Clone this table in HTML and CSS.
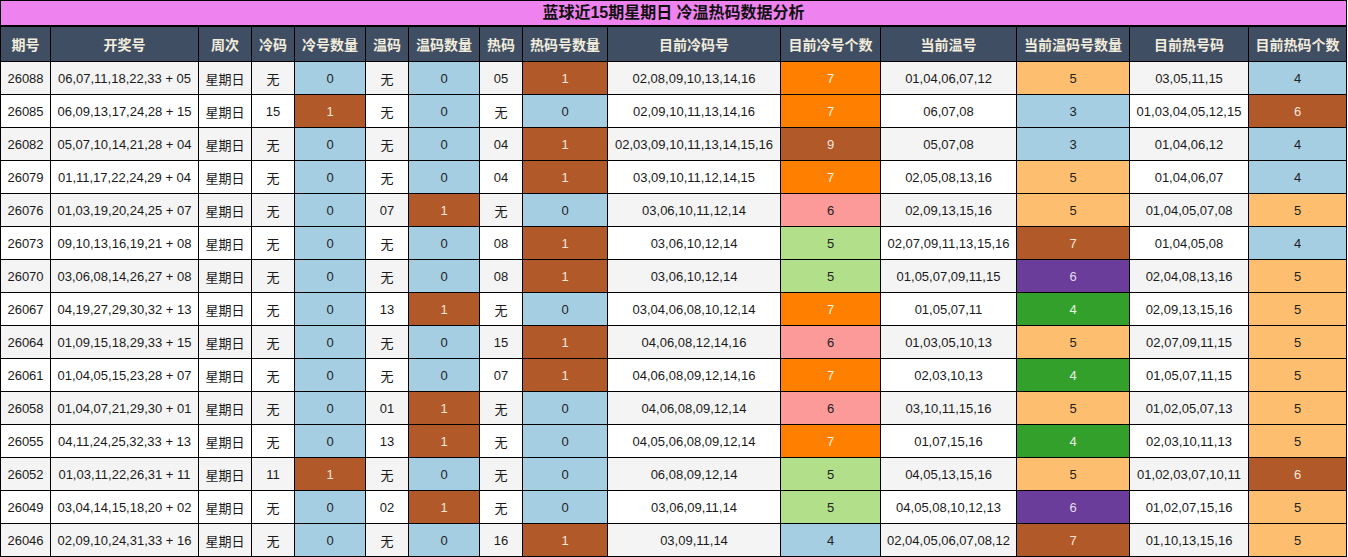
FILE: index.html
```html
<!DOCTYPE html>
<html lang="zh">
<head>
<meta charset="utf-8">
<title>蓝球近15期星期日 冷温热码数据分析</title>
<link rel="stylesheet" href="styles.css">
</head>
<body>
<div class="title">蓝球近15期星期日 冷温热码数据分析</div>
<table class="grid">
<colgroup>
<col class="w50"><col class="w148"><col class="w53"><col class="w43"><col class="w71"><col class="w43"><col class="w71"><col class="w43"><col class="w85"><col class="w173"><col class="w100"><col class="w136"><col class="w113"><col class="w119"><col class="w98">
</colgroup>
<thead>
<tr><th>期号</th><th>开奖号</th><th>周次</th><th>冷码</th><th>冷号数量</th><th>温码</th><th>温码数量</th><th>热码</th><th>热码号数量</th><th>目前冷码号</th><th>目前冷号个数</th><th>当前温号</th><th>当前温码号数量</th><th>目前热号码</th><th>目前热码个数</th></tr>
</thead>
<tbody>
<tr><td>26088</td><td>06,07,11,18,22,33 + 05</td><td>星期日</td><td>无</td><td class="lb">0</td><td>无</td><td class="lb">0</td><td>05</td><td class="br">1</td><td>02,08,09,10,13,14,16</td><td class="or">7</td><td>01,04,06,07,12</td><td class="lo">5</td><td>03,05,11,15</td><td class="lb">4</td></tr>
<tr><td>26085</td><td>06,09,13,17,24,28 + 15</td><td>星期日</td><td>15</td><td class="br">1</td><td>无</td><td class="lb">0</td><td>无</td><td class="lb">0</td><td>02,09,10,11,13,14,16</td><td class="or">7</td><td>06,07,08</td><td class="lb">3</td><td>01,03,04,05,12,15</td><td class="br">6</td></tr>
<tr><td>26082</td><td>05,07,10,14,21,28 + 04</td><td>星期日</td><td>无</td><td class="lb">0</td><td>无</td><td class="lb">0</td><td>04</td><td class="br">1</td><td>02,03,09,10,11,13,14,15,16</td><td class="br">9</td><td>05,07,08</td><td class="lb">3</td><td>01,04,06,12</td><td class="lb">4</td></tr>
<tr><td>26079</td><td>01,11,17,22,24,29 + 04</td><td>星期日</td><td>无</td><td class="lb">0</td><td>无</td><td class="lb">0</td><td>04</td><td class="br">1</td><td>03,09,10,11,12,14,15</td><td class="or">7</td><td>02,05,08,13,16</td><td class="lo">5</td><td>01,04,06,07</td><td class="lb">4</td></tr>
<tr><td>26076</td><td>01,03,19,20,24,25 + 07</td><td>星期日</td><td>无</td><td class="lb">0</td><td>07</td><td class="br">1</td><td>无</td><td class="lb">0</td><td>03,06,10,11,12,14</td><td class="pk">6</td><td>02,09,13,15,16</td><td class="lo">5</td><td>01,04,05,07,08</td><td class="lo">5</td></tr>
<tr><td>26073</td><td>09,10,13,16,19,21 + 08</td><td>星期日</td><td>无</td><td class="lb">0</td><td>无</td><td class="lb">0</td><td>08</td><td class="br">1</td><td>03,06,10,12,14</td><td class="lg">5</td><td>02,07,09,11,13,15,16</td><td class="br">7</td><td>01,04,05,08</td><td class="lb">4</td></tr>
<tr><td>26070</td><td>03,06,08,14,26,27 + 08</td><td>星期日</td><td>无</td><td class="lb">0</td><td>无</td><td class="lb">0</td><td>08</td><td class="br">1</td><td>03,06,10,12,14</td><td class="lg">5</td><td>01,05,07,09,11,15</td><td class="pu">6</td><td>02,04,08,13,16</td><td class="lo">5</td></tr>
<tr><td>26067</td><td>04,19,27,29,30,32 + 13</td><td>星期日</td><td>无</td><td class="lb">0</td><td>13</td><td class="br">1</td><td>无</td><td class="lb">0</td><td>03,04,06,08,10,12,14</td><td class="or">7</td><td>01,05,07,11</td><td class="gr">4</td><td>02,09,13,15,16</td><td class="lo">5</td></tr>
<tr><td>26064</td><td>01,09,15,18,29,33 + 15</td><td>星期日</td><td>无</td><td class="lb">0</td><td>无</td><td class="lb">0</td><td>15</td><td class="br">1</td><td>04,06,08,12,14,16</td><td class="pk">6</td><td>01,03,05,10,13</td><td class="lo">5</td><td>02,07,09,11,15</td><td class="lo">5</td></tr>
<tr><td>26061</td><td>01,04,05,15,23,28 + 07</td><td>星期日</td><td>无</td><td class="lb">0</td><td>无</td><td class="lb">0</td><td>07</td><td class="br">1</td><td>04,06,08,09,12,14,16</td><td class="or">7</td><td>02,03,10,13</td><td class="gr">4</td><td>01,05,07,11,15</td><td class="lo">5</td></tr>
<tr><td>26058</td><td>01,04,07,21,29,30 + 01</td><td>星期日</td><td>无</td><td class="lb">0</td><td>01</td><td class="br">1</td><td>无</td><td class="lb">0</td><td>04,06,08,09,12,14</td><td class="pk">6</td><td>03,10,11,15,16</td><td class="lo">5</td><td>01,02,05,07,13</td><td class="lo">5</td></tr>
<tr><td>26055</td><td>04,11,24,25,32,33 + 13</td><td>星期日</td><td>无</td><td class="lb">0</td><td>13</td><td class="br">1</td><td>无</td><td class="lb">0</td><td>04,05,06,08,09,12,14</td><td class="or">7</td><td>01,07,15,16</td><td class="gr">4</td><td>02,03,10,11,13</td><td class="lo">5</td></tr>
<tr><td>26052</td><td>01,03,11,22,26,31 + 11</td><td>星期日</td><td>11</td><td class="br">1</td><td>无</td><td class="lb">0</td><td>无</td><td class="lb">0</td><td>06,08,09,12,14</td><td class="lg">5</td><td>04,05,13,15,16</td><td class="lo">5</td><td>01,02,03,07,10,11</td><td class="br">6</td></tr>
<tr><td>26049</td><td>03,04,14,15,18,20 + 02</td><td>星期日</td><td>无</td><td class="lb">0</td><td>02</td><td class="br">1</td><td>无</td><td class="lb">0</td><td>03,06,09,11,14</td><td class="lg">5</td><td>04,05,08,10,12,13</td><td class="pu">6</td><td>01,02,07,15,16</td><td class="lo">5</td></tr>
<tr><td>26046</td><td>02,09,10,24,31,33 + 16</td><td>星期日</td><td>无</td><td class="lb">0</td><td>无</td><td class="lb">0</td><td>16</td><td class="br">1</td><td>03,09,11,14</td><td class="lb">4</td><td>02,04,05,06,07,08,12</td><td class="br">7</td><td>01,10,13,15,16</td><td class="lo">5</td></tr>
</tbody>
</table>
</body>
</html>
```

FILE: styles.css
```css
html, body {
  margin: 0;
  padding: 0;
  background: #ffffff;
}
body {
  font-family: "Liberation Sans", Arial, "Noto Sans CJK SC", sans-serif;
  color: #1a1a1a;
  width: 1348px;
}
.title {
  box-sizing: border-box;
  width: 1347px;
  height: 26px;
  border: 1px solid #000;
  border-bottom: 1px solid #000;
  background: #ee82ee;
  color: #111;
  font-weight: bold;
  font-size: 16px;
  line-height: 24px;
  text-align: center;
  font-family: "Liberation Sans", "Noto Sans CJK SC", sans-serif;
}
.grid {
  border-collapse: collapse;
  table-layout: fixed;
  width: 1347px;
}
.grid th, .grid td {
  border: 1px solid #000;
  text-align: center;
  padding: 0;
  white-space: nowrap;
  overflow: hidden;
}
.grid th {
  background: #3f4e63;
  color: #f2ecdc;
  font-weight: bold;
  font-size: 14px;
  height: 34px;
  font-family: "Liberation Sans", "Noto Sans CJK SC", sans-serif;
}
.grid td {
  font-size: 13px;
  height: 32px;
}
.grid tbody tr:nth-child(odd) { background: #f4f4f4; }
.grid tbody tr:nth-child(even) { background: #ffffff; }

.grid td.lb { background: #a6cee3; color: #222; }
.grid td.br { background: #b15928; color: #f3e6dc; }
.grid td.or { background: #ff7f00; color: #fff3e6; }
.grid td.pk { background: #fb9a99; color: #222; }
.grid td.lg { background: #b2df8a; color: #222; }
.grid td.pu { background: #6a3d9a; color: #e6ddef; }
.grid td.gr { background: #33a02c; color: #e6f4e4; }
.grid td.lo { background: #fdbf6f; color: #222; }

.w50 { width: 50px; }
.w148 { width: 148px; }
.w53 { width: 53px; }
.w43 { width: 43px; }
.w71 { width: 71px; }
.w85 { width: 85px; }
.w173 { width: 173px; }
.w100 { width: 100px; }
.w136 { width: 136px; }
.w113 { width: 113px; }
.w119 { width: 119px; }
.w98 { width: 98px; }
```
